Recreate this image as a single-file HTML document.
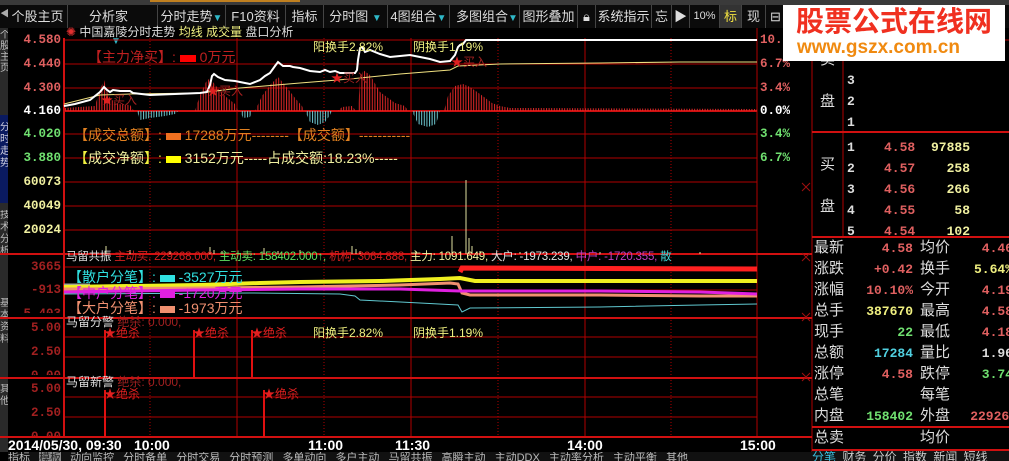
<!DOCTYPE html>
<html><head><meta charset="utf-8"><style>
*{margin:0;padding:0;box-sizing:border-box}
body{width:1009px;height:461px;background:#000;overflow:hidden;position:relative;font-family:"Liberation Sans","Noto Sans CJK SC","WenQuanYi Zen Hei",sans-serif;color:#ddd}
.a{position:absolute;white-space:nowrap;line-height:1}
.tb{position:absolute;top:5px;height:23px;background:#0b0b0b;border-right:1px solid #444;color:#ddd;font-size:13px;line-height:23px;text-align:center}
.tri{color:#2fb8c8;font-size:10px}
.m{font-family:"Liberation Mono","Noto Sans CJK SC",monospace;font-weight:bold}
.t{font-family:"Liberation Sans",sans-serif;font-weight:bold;font-size:14px;color:#fff}
.l{font-size:12.5px;font-family:"Liberation Mono",monospace;font-weight:bold;position:absolute;right:948px;white-space:nowrap;line-height:1}
.s{font-size:15px;color:#ddd;position:absolute;left:814px;line-height:1}
.s2{font-size:15px;color:#ddd;position:absolute;left:920px;line-height:1}
.v{position:absolute;right:96px;font-family:"Liberation Mono",monospace;font-weight:bold;font-size:13px;line-height:1}
.v2{position:absolute;right:-4px;font-family:"Liberation Mono",monospace;font-weight:bold;font-size:13px;line-height:1}
</style></head><body>
<div class="a" style="left:0;top:0;width:1009px;height:5px;background:#3a3a3a"></div>
<div class="a" style="left:150px;top:0;width:150px;height:2px;background:#c08020"></div>
<div class="a" style="left:0;top:5px;width:1009px;height:23px;background:#0b0b0b"></div>
<div class="a" style="left:0;top:9px;color:#aaa;font-size:11px">◀</div>
<div class="tb" style="left:8px;width:60px">个股主页</div>
<div class="tb" style="left:68px;width:90px;text-align:left;padding-left:21px">分析家 <span class="tri" style="margin-left:22px">▼</span></div>
<div class="tb" style="left:158px;width:68px">分时走势<span class="tri">▼</span></div>
<div class="tb" style="left:226px;width:60px">F10资料</div>
<div class="tb" style="left:286px;width:38px">指标</div>
<div class="tb" style="left:324px;width:64px">分时图 <span class="tri">▼</span></div>
<div class="tb" style="left:388px;width:62px">4图组合<span class="tri">▼</span></div>
<div class="tb" style="left:450px;width:70px;text-align:left;padding-left:6px">多图组合<span class="tri">▼</span></div>
<div class="tb" style="left:520px;width:58px">图形叠加</div>
<div class="tb" style="left:578px;width:18px">🔒︎</div>
<div class="tb" style="left:596px;width:56px">系统指示</div>
<div class="tb" style="left:652px;width:20px">忘</div>
<div class="tb" style="left:672px;width:18px">▶</div>
<div class="tb" style="left:690px;width:30px;font-size:11px">10%</div>
<div class="tb" style="left:720px;width:22px;background:#333;color:#f0e040">标</div>
<div class="tb" style="left:742px;width:24px">现</div>
<div class="tb" style="left:766px;width:20px">⊟</div>
<div class="a" style="left:0;top:28px;width:8px;height:424px;background:#2a2a2a"></div>
<div class="a" style="left:0;top:115px;width:8px;height:88px;background:#0a1a60"></div>
<div class="a" style="left:0;top:30px;font-size:10px;color:#bbb;width:8px;white-space:normal;line-height:11px;overflow:hidden">个股主页</div>
<div class="a" style="left:0;top:122px;font-size:10px;color:#ccd;width:8px;white-space:normal;line-height:12px;overflow:hidden">分时走势</div>
<div class="a" style="left:0;top:210px;font-size:10px;color:#bbb;width:8px;white-space:normal;line-height:12px;overflow:hidden">技术分析</div>
<div class="a" style="left:0;top:298px;font-size:10px;color:#bbb;width:8px;white-space:normal;line-height:12px;overflow:hidden">基本资料</div>
<div class="a" style="left:0;top:384px;font-size:10px;color:#bbb;width:8px;white-space:normal;line-height:12px;overflow:hidden">其他</div>

<svg class="a" style="left:0;top:0" width="1009" height="461">
<defs>
<pattern id="pr" width="2.6" height="4" patternUnits="userSpaceOnUse"><rect width="1" height="4" fill="#e02828"/></pattern>
<pattern id="pc" width="2.6" height="4" patternUnits="userSpaceOnUse"><rect width="1" height="4" fill="#6fc8d0"/></pattern>
</defs>
<g stroke="#b00000" stroke-width="1" fill="none">
<path d="M64 40H757M64 64H757M64 88H757M64 134H757M64 158H757M64 182H757M64 206H757M64 230H757"/>
<path d="M64 267H757M64 290H757M64 337H757M64 357H757M64 397H757M64 417H757"/>
<path d="M64 38V437M237 38V437M411 38V437M585 38V437M757 28V437"/>
<path d="M150 38V437M324 38V437M498 38V437M671 38V437" stroke-dasharray="1 2"/>
<path d="M812 28V452M843 40V237M812 40H1009"/>
</g>
<g stroke="#d01010" stroke-width="2" fill="none">
<path d="M64 111H757"/>
<path d="M0 254H812M0 318H812M0 378H812M0 437H812M812 132H1009M812 237H1009M812 427H1009M812 450H1009"/>
<path d="M64 38V437"/>
</g>
<polygon fill="url(#pr)" points="64,111 64,108 95,106 100,90 104,80 108,95 112,100 118,104 130,105 134,111"/>
<polygon fill="url(#pc)" points="137,111 140,120 150,118 165,116 175,114 178,111"/>
<polygon fill="url(#pr)" points="195,111 200,95 206,82 210,78 216,86 225,96 235,104 238,111"/>
<polygon fill="url(#pc)" points="240,111 243,118 250,117 252,111"/>
<polygon fill="url(#pr)" points="255,111 262,96 270,85 278,77 285,85 295,98 302,106 304,111"/>
<polygon fill="url(#pc)" points="305,111 310,122 318,125 325,122 330,115 332,111"/>
<polygon fill="url(#pr)" points="338,111 342,107 352,106 356,111"/>
<polygon fill="url(#pr)" points="358,111 360,80 363,70 370,75 380,92 395,103 405,106 408,111"/>
<polygon fill="url(#pc)" points="412,111 418,124 428,127 436,124 440,111"/>
<polygon fill="url(#pr)" points="444,111 448,96 455,86 463,84 470,87 480,94 492,103 500,106 510,108 530,108 757,109 757,111"/>
<g stroke="#e0e0a0" stroke-width="1">
<path d="M106 254V246M130 254V250M170 254V251M210 254V247M214 254V250M222 254V251M264 254V248M278 254V251M300 254V250M352 254V246M356 254V249M360 254V251M416 254V251M452 254V236M466 254V180M469 254V238M472 254V246M480 254V251M520 254V252M600 254V252M700 254V252"/>
</g>
<polyline fill="none" stroke="#f0e080" stroke-width="1" points="64,104 100,95 130,94 200,93 240,88 300,83 350,79 400,74 450,70 458,66 500,64 600,63 680,62 757,62"/>
<polyline fill="none" stroke="#fff" stroke-width="2" points="64,106 75,104 90,100 100,92 104,87 107,90 110,92 113,90 120,91 130,91 133,93 150,95 175,94 200,93 207,92 210,85 212,76 214,74 218,77 225,80 235,81 245,83 250,84 260,80 265,76 270,73 275,66 278,62 283,66 290,66 293,67 300,68 310,71 320,72 325,70 330,72 335,71 340,73 355,73 357,70 358,60 360,48 362,47 365,52 370,50 380,54 390,57 400,56 410,55 420,57 430,59 440,62 450,61 455,55 458,47 460,45 463,44 466,40 757,40"/>
<polyline fill="none" stroke="#a0a0a0" stroke-width="3" points="64,285 90,285"/>
<polyline fill="none" stroke="#ff2020" stroke-width="5" points="460,272 462,268 757,269"/>
<polyline fill="none" stroke="#f0f020" stroke-width="4" points="64,287 200,285 260,283 300,282 380,281 440,279 460,278 475,281 757,281"/>
<polyline fill="none" stroke="#f09070" stroke-width="3" points="64,289 200,288 300,287 400,285 450,283 458,284 462,293 470,295 600,295 700,296 757,296"/>
<polyline fill="none" stroke="#e020e0" stroke-width="3" points="64,292 200,290 300,289 400,289 460,291 600,291 700,292 757,294"/>
<polyline fill="none" stroke="#60c8d0" stroke-width="1" points="64,294 250,293 340,294 355,296 360,300 420,303 458,305 462,312 470,308 600,307 700,305 757,304"/>
<g stroke="#e01010" stroke-width="2"><path d="M105 330V378M194 330V378M252 330V378M105 390V437M264 390V437"/></g>
<g stroke="#a01010" stroke-width="1"><path d="M802 183l8 8M810 183l-8 8M802 253l8 8M810 253l-8 8M802 313l8 8M810 313l-8 8M802 373l8 8M810 373l-8 8"/></g>
</svg>

<div class="l" style="top:34px;color:#e06060">4.580</div>
<div class="l" style="top:58px;color:#e06060">4.440</div>
<div class="l" style="top:82px;color:#e06060">4.300</div>
<div class="l" style="top:105px;color:#fff">4.160</div>
<div class="l" style="top:128px;color:#70e070">4.020</div>
<div class="l" style="top:152px;color:#70e070">3.880</div>
<div class="l" style="top:176px;color:#f0f0a0">60073</div>
<div class="l" style="top:200px;color:#f0f0a0">40049</div>
<div class="l" style="top:224px;color:#f0f0a0">20024</div>
<div class="l" style="top:261px;color:#a02020">3665</div>
<div class="l" style="top:284px;color:#a02020">-913</div>
<div class="l" style="top:308px;color:#a02020;height:5px;overflow:hidden">5.403</div>
<div class="l" style="top:322px;color:#a02020">5.00</div>
<div class="l" style="top:346px;color:#a02020">2.50</div>
<div class="l" style="top:370px;color:#a02020;height:5px;overflow:hidden">0.00</div>
<div class="l" style="top:383px;color:#a02020">5.00</div>
<div class="l" style="top:407px;color:#a02020">2.50</div>
<div class="l" style="top:431px;color:#a02020;height:5px;overflow:hidden">0.00</div>
<div class="a m" style="left:760px;top:34px;color:#e06060;font-size:12.5px">10.1%</div>
<div class="a m" style="left:760px;top:58px;color:#e06060;font-size:12.5px">6.7%</div>
<div class="a m" style="left:760px;top:82px;color:#e06060;font-size:12.5px">3.4%</div>
<div class="a m" style="left:760px;top:105px;color:#fff;font-size:12.5px">0.0%</div>
<div class="a m" style="left:760px;top:128px;color:#70e070;font-size:12.5px">3.4%</div>
<div class="a m" style="left:760px;top:152px;color:#70e070;font-size:12.5px">6.7%</div>

<div class="a" style="left:66px;top:26px;font-size:12px;color:#ddd"><span style="color:#e03030">✺</span> 中国嘉陵分时走势 <span style="color:#f0f080">均线 成交量</span> 盘口分析</div>
<div class="a" style="left:88px;top:50px;font-size:14px;color:#c02020">【主力净买】: <span style="display:inline-block;width:16px;height:7px;background:#f00"></span> 0万元</div>
<div class="a" style="left:74px;top:128px;font-size:14px;color:#e08020">【成交总额】: <span style="display:inline-block;width:15px;height:7px;background:#f07020"></span> 17288万元--------【成交额】-----------</div>
<div class="a" style="left:74px;top:151px;font-size:14px;color:#f0f040">【<span style="color:#f0f0a0">成交净额</span>】: <span style="display:inline-block;width:15px;height:7px;background:#ff0"></span> <span style="color:#f0f0a0">3152万元-----占成交额:18.23%-----</span></div>
<div class="a" style="left:313px;top:41px;font-size:12px;color:#f0f080">阳换手2.82%</div>
<div class="a" style="left:413px;top:41px;font-size:12px;color:#f0f080">阴换手1.19%</div>
<div class="a" style="left:101px;top:94px;font-size:12px;color:#e02020">★<span style="color:#a02020">买入</span></div>
<div class="a" style="left:207px;top:85px;font-size:12px;color:#e02020">★<span style="color:#a02020">买入</span></div>
<div class="a" style="left:331px;top:72px;font-size:12px;color:#e02020">★<span style="color:#a02020">买入</span></div>
<div class="a" style="left:451px;top:56px;font-size:12px;color:#e02020">★<span style="color:#a02020">买入</span></div>

<div class="a" style="left:66px;top:252px;font-size:11.5px;color:#ddd;letter-spacing:-0.2px">马留共振 <span style="color:#d02020">主动买: 229268.000,</span> <span style="color:#60e060">主动卖: 158402.000↑,</span> <span style="color:#d02020">机构: 3064.888,</span> <span style="color:#f0f0a0">主力: 1091.649,</span> <span style="color:#e0e0e0">大户: -1973.239,</span> <span style="color:#c040c0">中户: -1720.355,</span> <span style="color:#40d0d0">散</span></div>
<div class="a" style="left:68px;top:270px;font-size:14px;color:#30e0e0">【散户分笔】: <span style="display:inline-block;width:15px;height:7px;background:#30e0e0"></span> -3527万元</div>
<div class="a" style="left:68px;top:286px;font-size:14px;color:#e020e0">【中户分笔】: <span style="display:inline-block;width:15px;height:7px;background:#e020e0"></span> -1720万元</div>
<div class="a" style="left:68px;top:301px;font-size:14px;color:#f09070">【大户分笔】: <span style="display:inline-block;width:15px;height:7px;background:#f09070"></span> -1973万元</div>
<div class="a" style="left:66px;top:316px;font-size:12px;color:#ddd">马留分警 <span style="color:#a02020">绝杀: 0.000,</span></div>
<div class="a" style="left:104px;top:327px;font-size:12px;color:#e02020">★绝杀</div>
<div class="a" style="left:193px;top:327px;font-size:12px;color:#e02020">★绝杀</div>
<div class="a" style="left:251px;top:327px;font-size:12px;color:#e02020">★绝杀</div>
<div class="a" style="left:313px;top:327px;font-size:12px;color:#f0f080">阳换手2.82%</div>
<div class="a" style="left:413px;top:327px;font-size:12px;color:#f0f080">阴换手1.19%</div>
<div class="a" style="left:66px;top:376px;font-size:12px;color:#ddd">马留新警 <span style="color:#a02020">绝杀: 0.000,</span></div>
<div class="a" style="left:104px;top:388px;font-size:12px;color:#e02020">★绝杀</div>
<div class="a" style="left:263px;top:388px;font-size:12px;color:#e02020">★绝杀</div>

<div class="a t" style="left:8px;top:438px">2014/05/30, 09:30</div>
<div class="a t" style="left:134px;top:438px">10:00</div>
<div class="a t" style="left:308px;top:438px">11:00</div>
<div class="a t" style="left:395px;top:438px">11:30</div>
<div class="a t" style="left:567px;top:438px">14:00</div>
<div class="a t" style="left:740px;top:438px">15:00</div>
<div class="a" style="left:8px;top:452px;width:804px;height:9px;background:#111;overflow:hidden;font-size:11px;color:#bbb;word-spacing:6px;line-height:12px">指标 <span style="background:#888;color:#222">模板</span> 动向监控 分时备单 分时交易 分时预测 多单动向 多户主动 马留共振 高瞬主动 主动DDX 主动率分析 主动平衡 其他</div>
<div class="a" style="left:812px;top:451px;width:197px;height:10px;background:#111;overflow:hidden;font-size:12px;color:#ccc;word-spacing:3px;line-height:13px"><span style="color:#3ac0e0">分笔</span> 财务 分价 指数 新闻 短线</div>

<div class="a" style="left:820px;top:52px;font-size:15px;color:#ddd">卖</div>
<div class="a" style="left:820px;top:94px;font-size:15px;color:#ddd">盘</div>
<div class="a m" style="left:847px;top:74px;font-size:13px;color:#ddd">3</div>
<div class="a m" style="left:847px;top:95px;font-size:13px;color:#ddd">2</div>
<div class="a m" style="left:847px;top:116px;font-size:13px;color:#ddd">1</div>
<div class="a" style="left:820px;top:157px;font-size:15px;color:#ddd">买</div>
<div class="a" style="left:820px;top:199px;font-size:15px;color:#ddd">盘</div>
<div class="a m" style="left:847px;top:137px;font-size:13px;color:#ddd;line-height:21px">1<br>2<br>3<br>4<br>5</div>
<div class="a m" style="left:884px;top:137px;font-size:13px;color:#e06060;line-height:21px">4.58<br>4.57<br>4.56<br>4.55<br>4.54</div>
<div class="a m" style="left:920px;top:137px;width:50px;text-align:right;font-size:13px;color:#f0f0a0;line-height:21px">97885<br>258<br>266<br>58<br>102</div>
<div class="s" style="top:240px">最新</div><div class="v" style="top:242px;color:#e06060">4.58</div><div class="s2" style="top:240px">均价</div><div class="v2" style="top:242px;color:#e06060">4.46</div>
<div class="s" style="top:261px">涨跌</div><div class="v" style="top:263px;color:#e06060">+0.42</div><div class="s2" style="top:261px">换手</div><div class="v2" style="top:263px;color:#f0f080">5.64%</div>
<div class="s" style="top:282px">涨幅</div><div class="v" style="top:284px;color:#e06060">10.10%</div><div class="s2" style="top:282px">今开</div><div class="v2" style="top:284px;color:#e06060">4.19</div>
<div class="s" style="top:303px">总手</div><div class="v" style="top:305px;color:#f0f080">387670</div><div class="s2" style="top:303px">最高</div><div class="v2" style="top:305px;color:#e06060">4.58</div>
<div class="s" style="top:324px">现手</div><div class="v" style="top:326px;color:#70e070">22</div><div class="s2" style="top:324px">最低</div><div class="v2" style="top:326px;color:#e06060">4.18</div>
<div class="s" style="top:345px">总额</div><div class="v" style="top:347px;color:#50d0e0">17284</div><div class="s2" style="top:345px">量比</div><div class="v2" style="top:347px;color:#ddd">1.96</div>
<div class="s" style="top:366px">涨停</div><div class="v" style="top:368px;color:#e06060">4.58</div><div class="s2" style="top:366px">跌停</div><div class="v2" style="top:368px;color:#70e070">3.74</div>
<div class="s" style="top:387px">总笔</div><div class="s2" style="top:387px">每笔</div>
<div class="s" style="top:408px">内盘</div><div class="v" style="top:410px;color:#70e070">158402</div><div class="s2" style="top:408px">外盘</div><div class="v2" style="top:410px;color:#e06060;right:-8px">229268</div>
<div class="s" style="top:430px">总卖</div><div class="s2" style="top:430px">均价</div>

<div class="a" style="left:783px;top:5px;width:222px;height:56px;background:#fff"></div>
<div class="a" style="left:796px;top:8px;font-size:28px;font-weight:bold;color:#f03020">股票公式在线网</div>
<div class="a" style="left:797px;top:38px;font-size:19px;font-weight:bold;color:#f08a10">www.gszx.com.cn</div>
</body></html>
